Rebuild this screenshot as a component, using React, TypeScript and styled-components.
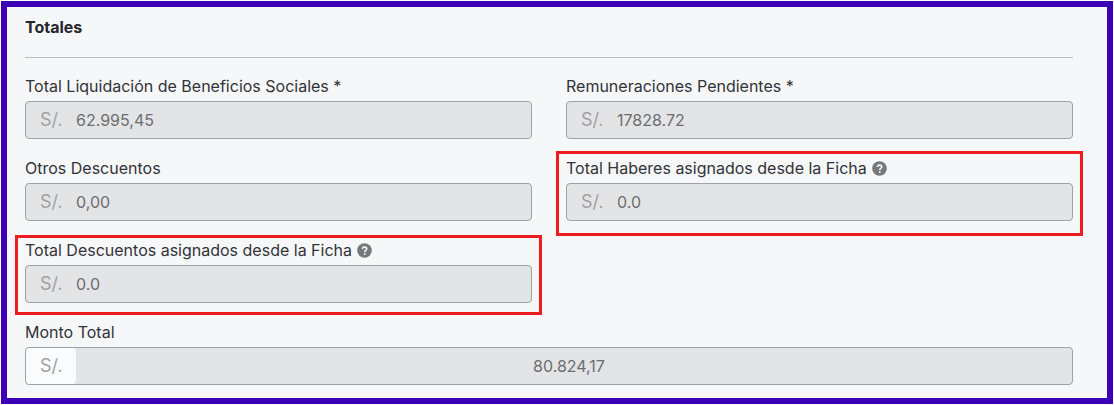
import React, { useId } from "react";
import styled, { createGlobalStyle, css } from "styled-components";

const GlobalStyle = createGlobalStyle`
  *, *::before, *::after { box-sizing: border-box; }
  body {
    margin: 0;
    background: #fff;
    font-family: Inter, "Liberation Sans", sans-serif;
    color: #323338;
  }
`;

const Panel = styled.section`
  margin: 1px;
  padding: 10px 34px 13px 18px;
  border: 6px solid #3b00b5;
  background: #f6f7f9;
`;

const Title = styled.h2`
  margin: 0;
  padding-bottom: 20px;
  border-bottom: 1px solid #bcbec0;
  font-size: 16px;
  line-height: 20px;
  font-weight: 700;
  color: #26272b;
`;

const Form = styled.form`
  display: grid;
  grid-template-columns: 1fr 1fr;
  gap: 19px 34px;
  margin-top: 18px;
`;

const FieldBox = styled.div<{ $wide?: boolean }>`
  position: relative;
  display: flex;
  flex-direction: column;
  gap: 5px;
  min-width: 0;
  ${(p) => p.$wide && css`grid-column: 1 / -1;`}
`;

const Highlight = styled.span<{ $above: number; $below: number }>`
  position: absolute;
  inset: ${(p) => -p.$above}px -10px ${(p) => -p.$below}px;
  border: 3px solid #ec1c1f;
  pointer-events: none;
`;

const LabelRow = styled.div`
  display: flex;
  align-items: center;
  gap: 5px;
  font-size: 16px;
  line-height: 20px;
`;

const InputGroup = styled.div`
  display: flex;
  height: 38px;
  overflow: hidden;
  border: 1px solid #a0a2a5;
  border-radius: 4px;
  background: #e3e4e6;
`;

const Prefix = styled.span<{ $light?: boolean }>`
  flex: none;
  width: 50px;
  padding-left: 14px;
  border-radius: 4px;
  font-size: 18px;
  line-height: 36px;
  color: #a0a1a4;
  background: ${(p) => (p.$light ? "#fafbfd" : "transparent")};
`;

const Input = styled.input<{ $centered?: boolean }>`
  flex: 1;
  min-width: 0;
  padding: 0 10px 0 0;
  border: 0;
  background: transparent;
  font: inherit;
  font-size: 16px;
  color: #6c6d70;
  text-align: ${(p) => (p.$centered ? "center" : "left")};
`;

const HelpSvg = styled.svg`
  flex: none;
  display: block;
`;

function HelpIcon() {
  return (
    <HelpSvg width="15" height="15" viewBox="0 0 14 14" role="img" aria-label="Ayuda">
      <circle cx="7" cy="7" r="6.800" fill="#77787b" />
      <path
        d="M5 5.500C5.200 4.300 6 3.800 7.100 3.800c1.200 0 2 .7 2 1.600 0 1.400-1.900 1.400-1.900 2.900"
        fill="none"
        stroke="#f6f7f9"
        strokeWidth="1.500"
      />
      <circle cx="7.200" cy="10.200" r="0.900" fill="#f6f7f9" />
    </HelpSvg>
  );
}

interface FieldProps {
  label: string;
  value: string;
  help?: boolean;
  total?: boolean;
  highlight?: { above: number; below: number };
}

function Field({ label, value, help, total, highlight }: FieldProps) {
  const id = useId();
  return (
    <FieldBox $wide={total}>
      <LabelRow>
        <label htmlFor={id}>{label}</label>
        {help && <HelpIcon />}
      </LabelRow>
      <InputGroup>
        <Prefix $light={total}>S/.</Prefix>
        <Input id={id} type="text" value={value} disabled $centered={total} />
      </InputGroup>
      {highlight && <Highlight $above={highlight.above} $below={highlight.below} />}
    </FieldBox>
  );
}

export default function App() {
  return (
    <>
      <GlobalStyle />
      <Panel>
        <Title>Totales</Title>
        <Form>
          <Field label="Total Liquidación de Beneficios Sociales *" value="62.995,45" />
          <Field label="Remuneraciones Pendientes *" value="17828.72" />
          <Field label="Otros Descuentos" value="0,00" />
          <Field
            label="Total Haberes asignados desde la Ficha"
            value="0.0"
            help
            highlight={{ above: 7, below: 15 }}
          />
          <Field
            label="Total Descuentos asignados desde la Ficha"
            value="0.0"
            help
            highlight={{ above: 5, below: 12 }}
          />
          <Field label="Monto Total" value="80.824,17" total />
        </Form>
      </Panel>
    </>
  );
}
